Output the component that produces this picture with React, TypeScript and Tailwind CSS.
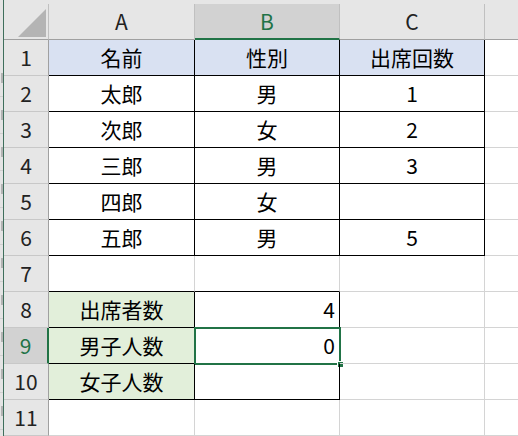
const FONT = 'font-[family-name:Noto_Sans_CJK_JP,sans-serif]';

// cell border styles
const T = 'border-r border-b border-black'; // inside the drawn tables
const G = 'border-r border-b border-[#d4d4d4]'; // plain gridline
const GB = 'border-r border-b border-r-[#d4d4d4] border-b-black'; // row 7, above summary block
const BLUE = 'bg-[#d9e1f2]';
const GREEN = 'bg-[#e2efda]';

type Cell = { v?: string; cls: string; right?: boolean; sel?: boolean };

const rows: { n: number; cells: Cell[] }[] = [
  { n: 1, cells: [{ v: '名前', cls: `${T} ${BLUE}` }, { v: '性別', cls: `${T} ${BLUE}` }, { v: '出席回数', cls: `${T} ${BLUE}` }] },
  { n: 2, cells: [{ v: '太郎', cls: T }, { v: '男', cls: T }, { v: '1', cls: T }] },
  { n: 3, cells: [{ v: '次郎', cls: T }, { v: '女', cls: T }, { v: '2', cls: T }] },
  { n: 4, cells: [{ v: '三郎', cls: T }, { v: '男', cls: T }, { v: '3', cls: T }] },
  { n: 5, cells: [{ v: '四郎', cls: T }, { v: '女', cls: T }, { cls: T }] },
  { n: 6, cells: [{ v: '五郎', cls: T }, { v: '男', cls: T }, { v: '5', cls: T }] },
  { n: 7, cells: [{ cls: GB }, { cls: GB }, { cls: G }] },
  { n: 8, cells: [{ v: '出席者数', cls: `${T} ${GREEN}` }, { v: '4', cls: T, right: true }, { cls: G }] },
  { n: 9, cells: [{ v: '男子人数', cls: `${T} ${GREEN}` }, { v: '0', cls: T, right: true, sel: true }, { cls: G }] },
  { n: 10, cells: [{ v: '女子人数', cls: `${T} ${GREEN}` }, { cls: T }, { cls: G }] },
  { n: 11, cells: [{ cls: G }, { cls: G }, { cls: G }] },
];

const widths = ['w-[146px]', 'w-[145px]', 'w-[145px]'];

function ColHeader({ label, w, active, last }: { label: string; w: string; active?: boolean; last?: boolean }) {
  return (
    <div
      className={`${w} h-[36px] flex items-center justify-center ${
        active ? 'bg-[#d2d2d2] border-b-2 border-b-[#217346] text-[#217346]' : 'border-b border-b-[#a0a0a0]'
      } ${last ? '' : 'border-r border-r-[#c0c0c0]'}`}
    >
      {label}
    </div>
  );
}

export default function App() {
  return (
    <div className={`w-[518px] h-[436px] overflow-hidden flex bg-white text-[21px] leading-none text-black ${FONT}`}>
      {/* edge of the window behind */}
      <div className="w-[3px] shrink-0 bg-[#e4e4e4] flex flex-col pt-[60px]">
        {Array.from({ length: 10 }).map((_, i) => (
          <div key={i} className="h-[37px] shrink-0 flex items-center justify-end border-b border-[#d0d0d0]">
            <div className="w-[2px] h-[10px] bg-[#b4b4b4]" />
          </div>
        ))}
      </div>
      <div className="w-px shrink-0 bg-[#3f6f5c]" />

      <div className="flex-1 flex flex-col">
        {/* column headers */}
        <div className="h-[40px] shrink-0 flex items-end bg-[#e6e6e6] text-[#222]">
          <div className="w-[45px] h-[36px] border-r border-b border-r-[#c0c0c0] border-b-[#a0a0a0] flex items-end justify-end pr-[2px] pb-[2px]">
            <svg width="28" height="28" viewBox="0 0 28 28">
              <polygon points="28,0 28,28 0,28" fill="#b4b4b4" />
            </svg>
          </div>
          <ColHeader label="A" w="w-[146px]" />
          <ColHeader label="B" w="w-[145px]" active />
          <ColHeader label="C" w="w-[145px]" />
          <ColHeader label="" w="flex-1" last />
        </div>

        {rows.map((row) => (
          <div key={row.n} className="h-[36px] shrink-0 flex">
            <div
              className={`w-[45px] flex items-center justify-center border-b border-b-[#c8c8c8] ${
                row.n === 9
                  ? 'bg-[#d2d2d2] text-[#217346] border-r-2 border-r-[#217346]'
                  : 'bg-[#e6e6e6] text-[#222] border-r border-r-[#a0a0a0]'
              }`}
            >
              {row.n}
            </div>
            {row.cells.map((c, i) => (
              <div
                key={i}
                className={`${widths[i]} ${c.cls} relative flex items-center ${
                  c.right ? 'justify-end pr-[4px]' : 'justify-center'
                }`}
              >
                {c.v}
                {c.sel && (
                  <div className="absolute -left-px -top-px right-[-2px] bottom-[-2px] border-2 border-[#217346]">
                    <div className="absolute right-[-5px] bottom-[-5px] w-[7px] h-[7px] bg-[#217346] border border-white" />
                  </div>
                )}
              </div>
            ))}
            <div className="flex-1 border-b border-[#d4d4d4]" />
          </div>
        ))}
      </div>
    </div>
  );
}
